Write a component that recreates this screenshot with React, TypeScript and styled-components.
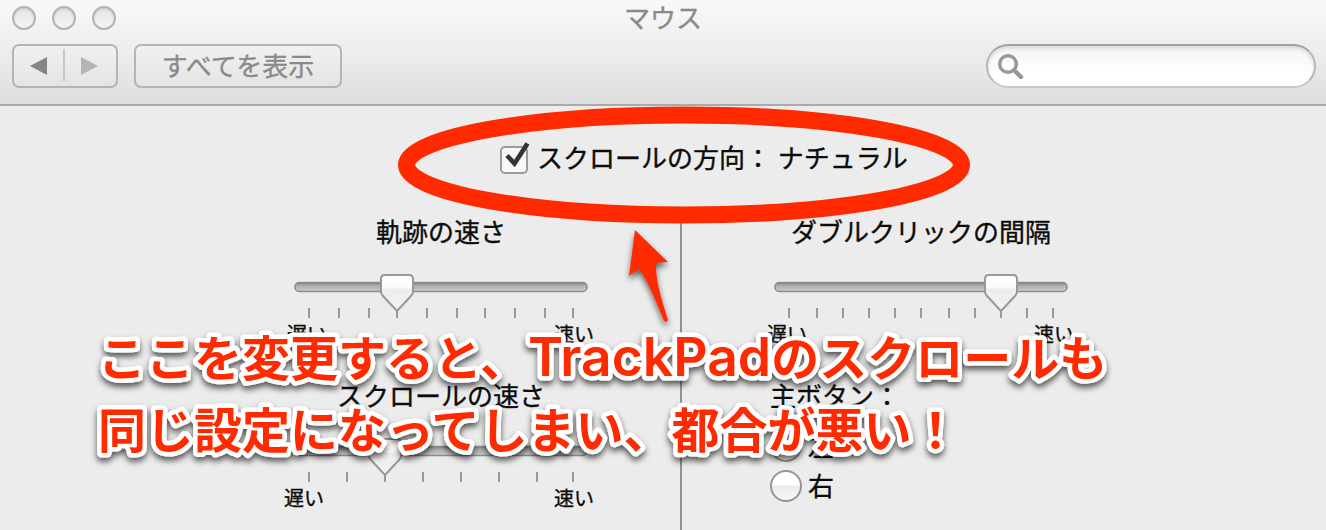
import React from 'react';
import styled, { createGlobalStyle } from 'styled-components';

const GlobalStyle = createGlobalStyle`
  * { box-sizing: border-box; }
  body { margin: 0; overflow: hidden; background: #ececec; }
`;

const Window = styled.div`
  position: relative;
  width: 1326px;
  height: 530px;
  overflow: hidden;
  background: #ececec;
  color: #0c0c0c;
  font: 26px/30px 'Noto Sans CJK JP', sans-serif;
  -webkit-text-stroke: 0.35px currentColor;
  white-space: nowrap;
`;

const Header = styled.header`
  height: 106px;
  background: linear-gradient(#f9f9f9, #ededed 50%, #dedede);
  border-bottom: 2px solid #aaa;
`;

const TitleBar = styled.div`
  display: grid;
  grid-template-columns: 1fr auto 1fr;
  align-items: center;
  height: 36px;
  padding: 0 12px;
`;

const Lights = styled.div`
  display: flex;
  gap: 16px;
`;

const Light = styled.span`
  width: 24px;
  height: 24px;
  border: 2px solid #b3b3b3;
  border-radius: 50%;
  background: linear-gradient(#e2e2e2, #f6f6f6);
  box-shadow: inset 0 1px 2px #ccc;
`;

const Title = styled.h1`
  height: 36px;
  margin: 0;
  color: #8a8a8a;
  font-size: 26px;
  font-weight: 400;
  line-height: 34px;
`;

const Toolbar = styled.div`
  display: flex;
  gap: 16px;
  padding: 8px 10px 0 12px;
`;

const ToolButton = styled.button<{ $width: number }>`
  display: flex;
  align-items: center;
  justify-content: center;
  width: ${(p) => p.$width}px;
  height: 44px;
  padding: 0 0 2px 0;
  border: 2px solid #b4b4b4;
  border-radius: 7px;
  background: linear-gradient(#f1f1f1, #e4e4e4);
  color: #8a8a8a;
  font: inherit;
`;

const SearchField = styled.div`
  display: flex;
  align-items: center;
  width: 330px;
  height: 44px;
  margin-left: auto;
  padding-left: 9px;
  border: 2px solid #b7b7b7;
  border-top-color: #a2a2a2;
  border-bottom-color: #c8c8c8;
  border-radius: 22px;
  background: linear-gradient(#f5f5f5, #fff 70%);
  box-shadow: inset 0 3px 4px -1px #d4d4d4;
`;

const ScrollOption = styled.label`
  display: flex;
  gap: 4px;
  height: 107px;
  padding: 36px 0 0 499px;
  word-spacing: 1px;
`;

const CheckBox = styled.svg`
  overflow: visible;
`;

const Columns = styled.main`
  display: flex;
  height: 317px;
`;

const Column = styled.section<{ $divider?: boolean }>`
  width: ${(p) => (p.$divider ? 682 : 644)}px;
  padding-left: ${(p) => (p.$divider ? 284 : 82)}px;
  border-right: ${(p) => (p.$divider ? '2px solid #929292' : '0')};
`;

const Setting = styled.div`
  width: 314px;
  height: 164px;
`;

const SettingTitle = styled.h2`
  height: 62px;
  margin: 0;
  padding-top: 3px;
  font-size: 26px;
  font-weight: 400;
  line-height: 30px;
  text-align: center;
`;

const SliderArt = styled.svg`
  display: block;
  margin-left: 8px;
  overflow: visible;
`;

const RangeLabels = styled.div<{ $indent: number }>`
  display: flex;
  justify-content: space-between;
  padding: 1px 4px 0 ${(p) => p.$indent}px;
  font-size: 20px;
  line-height: 24px;
`;

const ButtonGroup = styled.div`
  padding-left: 6px;
`;

const GroupTitle = styled.div`
  padding-top: 3px;
  height: 49px;
`;

const RadioRow = styled.label`
  display: flex;
  align-items: center;
  gap: 6px;
  height: 40px;
`;

const RadioText = styled.span`
  height: 33px;
`;

const Radio = styled.span`
  width: 32px;
  height: 32px;
  border: 2px solid #969696;
  border-radius: 50%;
  background: linear-gradient(#fff 45%, #ebebeb 50%, #f8f8f8);
`;

const Marks = styled.svg`
  position: absolute;
  inset: 0;
`;

const NoteText = styled.text`
  fill: #ff2a00;
  stroke: #fff;
  stroke-width: 9px;
  stroke-linejoin: round;
  paint-order: stroke fill;
  font-size: 48px;
  font-weight: 700;
`;

const Latin = styled.tspan`
  font-family: Inter, 'Liberation Sans', sans-serif;
  font-size: 53.4px;
  font-weight: 600;
`;

interface SliderProps {
  ticks: number[];
  thumb: number;
}

function Slider({ ticks, thumb }: SliderProps) {
  return (
    <SliderArt width="300" height="46" viewBox="0 0 300 46">
      <defs>
        <linearGradient id="track" x1="0" y1="0" x2="0" y2="1">
          <stop offset="0" stopColor="#7c7c7c" />
          <stop offset="0.3" stopColor="#a9a9a9" />
          <stop offset="1" stopColor="#cfcfcf" />
        </linearGradient>
        <linearGradient id="thumb" x1="0" y1="0" x2="0" y2="1">
          <stop offset="0" stopColor="#fff" />
          <stop offset="0.35" stopColor="#fafafa" />
          <stop offset="0.4" stopColor="#ededed" />
          <stop offset="1" stopColor="#f2f2f2" />
        </linearGradient>
      </defs>
      <rect x="3" y="7.5" width="292" height="9" rx="4" fill="url(#track)" stroke="#8c8c8c" strokeWidth="1.5" />
      {ticks.map((x) => (
        <rect key={x} x={x} y="33" width="2" height="10" fill="#999" />
      ))}
      <path
        transform={`translate(${thumb + 1} 0)`}
        d="M-16 4Q-16 0-12 0H12Q16 0 16 4V17Q16 19 14 21L0 36L-14 21Q-16 19-16 17Z"
        fill="url(#thumb)"
        stroke="#999"
        strokeWidth="2"
      />
    </SliderArt>
  );
}

const TRACKING_TICKS = [16, 46, 76, 104, 134, 164, 192, 222, 252, 280];
const SCROLL_TICKS = [16, 54, 92, 130, 168, 206, 244, 280];
const DOUBLE_CLICK_TICKS = [16, 44, 70, 96, 122, 148, 176, 202, 228, 254, 280];

interface SpeedSettingProps extends SliderProps {
  title: string;
  indent: number;
}

function SpeedSetting({ title, indent, ticks, thumb }: SpeedSettingProps) {
  return (
    <Setting>
      <SettingTitle>{title}</SettingTitle>
      <Slider ticks={ticks} thumb={thumb} />
      <RangeLabels $indent={indent}>
        <span>遅い</span>
        <span>速い</span>
      </RangeLabels>
    </Setting>
  );
}

export default function App() {
  return (
    <Window>
      <GlobalStyle />
      <Header>
        <TitleBar>
          <Lights>
            <Light />
            <Light />
            <Light />
          </Lights>
          <Title>マウス</Title>
        </TitleBar>
        <Toolbar>
          <ToolButton $width={106} aria-label="navigation">
            <svg width="80" height="34" viewBox="0 0 80 34">
              <path d="M5 18L22 9V27Z" fill="#858585" />
              <path d="M39 1V33" stroke="#c6c6c6" strokeWidth="2" />
              <path d="M56 9L73 18L56 27Z" fill="#b5b5b5" />
            </svg>
          </ToolButton>
          <ToolButton $width={208}>すべてを表示</ToolButton>
          <SearchField>
            <svg width="28" height="28" viewBox="0 0 28 28" fill="none" stroke="#979797">
              <circle cx="11" cy="12" r="8.3" strokeWidth="3.4" />
              <path d="M17 18L24 25" strokeWidth="4.4" strokeLinecap="round" />
            </svg>
          </SearchField>
        </Toolbar>
      </Header>
      <ScrollOption>
        <CheckBox width="34" height="34" viewBox="0 0 34 34">
          <rect x="2" y="5" width="26" height="26" rx="4" fill="#f7f7f7" stroke="#9b9b9b" strokeWidth="2" />
          <path d="M8 13.5L15.5 21.5L28.5 1.5" fill="none" stroke="#333" strokeWidth="4.6" />
        </CheckBox>
        <span>スクロールの方向： ナチュラル</span>
      </ScrollOption>
      <Columns>
        <Column $divider>
          <SpeedSetting title="軌跡の速さ" indent={3} ticks={TRACKING_TICKS} thumb={104} />
          <SpeedSetting title="スクロールの速さ" indent={0} ticks={SCROLL_TICKS} thumb={92} />
        </Column>
        <Column>
          <SpeedSetting title="ダブルクリックの間隔" indent={3} ticks={DOUBLE_CLICK_TICKS} thumb={228} />
          <ButtonGroup>
            <GroupTitle>主ボタン：</GroupTitle>
            <RadioRow>
              <Radio />
              <RadioText>左</RadioText>
            </RadioRow>
            <RadioRow>
              <Radio />
              <RadioText>右</RadioText>
            </RadioRow>
          </ButtonGroup>
        </Column>
      </Columns>
      <Marks width="1326" height="530" viewBox="0 0 1326 530">
        <defs>
          <filter id="arrowShadow" x="-50%" y="-30%" width="200%" height="170%">
            <feDropShadow dx="0" dy="4" stdDeviation="3" floodOpacity="0.6" />
          </filter>
          <filter id="noteShadow" x="-5%" y="-20%" width="110%" height="140%">
            <feDropShadow dx="0" dy="4" stdDeviation="3" floodOpacity="0.65" />
          </filter>
        </defs>
        <ellipse cx="684" cy="165" rx="277.5" ry="50" fill="none" stroke="#ff2a00" strokeWidth="17" />
        <path
          d="M635 230L668 262L656 263C655 279 662 301 668 320Q667 323 664 321C656 302 649 282 639 269L629 276Z"
          fill="#ff2a00"
          filter="url(#arrowShadow)"
        />
        <g filter="url(#noteShadow)">
          <NoteText x="98" y="376">
            ここを変更すると、<Latin>TrackPad</Latin>のスクロールも
          </NoteText>
          <NoteText x="98" y="448">同じ設定になってしまい、都合が悪い！</NoteText>
        </g>
      </Marks>
    </Window>
  );
}
